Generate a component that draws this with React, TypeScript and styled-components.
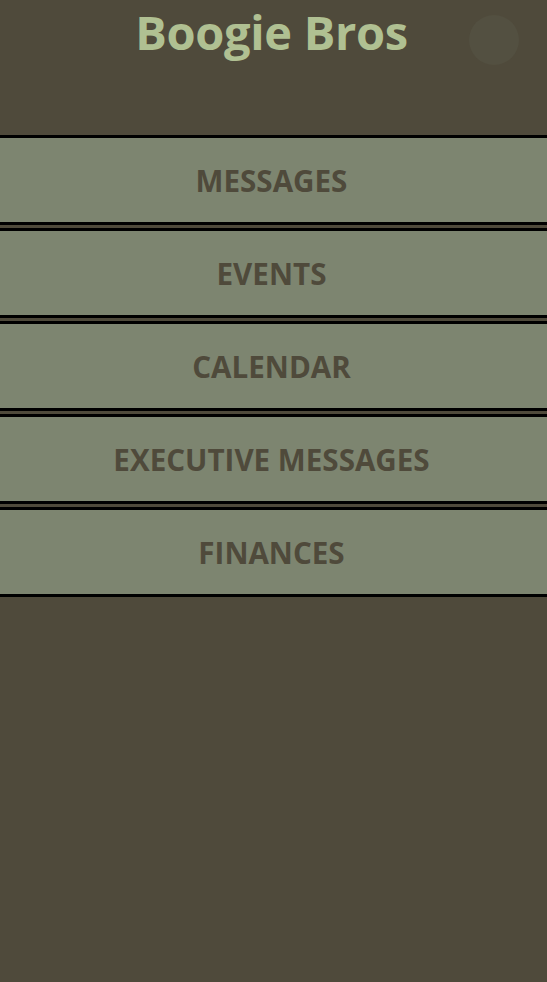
import React from 'react';
import styled, {createGlobalStyle} from "styled-components";

const GlobalStyle = createGlobalStyle`
    html, body {
        margin: 0;
        padding: 0;
        background: #4f4a3b;
    }

    body {
        font-family: "Open Sans", "Noto Sans", sans-serif;
    }
`

type MenuItemType = {
  id: string
  title: string
}

const menuItems: Array<MenuItemType> = [
  {id: 'messages', title: 'MESSAGES'},
  {id: 'events', title: 'EVENTS'},
  {id: 'calendar', title: 'CALENDAR'},
  {id: 'executive', title: 'EXECUTIVE MESSAGES'},
  {id: 'finances', title: 'FINANCES'},
];

export default function App() {
  const itemsElements = menuItems.map((item) => (
    <MenuItem key={item.id}>{item.title}</MenuItem>
  ))

  return (
    <>
      <GlobalStyle/>
      <Page>
        <Header>
          <Title>Boogie Bros</Title>
          <MenuToggle aria-label={'menu'}/>
        </Header>
        <Menu>
          {itemsElements}
        </Menu>
      </Page>
    </>
  );
}

const Page = styled.div`
    min-height: 982px;
    background: #4f4a3b;
`

const Header = styled.header`
    position: relative;
    height: 135px;
    display: flex;
    justify-content: center;
    align-items: flex-start;
    padding-right: 4px;
    box-sizing: border-box;
`

const Title = styled.h1`
    margin: 0;
    font-size: 47px;
    line-height: 64px;
    font-weight: 700;
    color: #b0c092;
    letter-spacing: -0.3px;
`

const MenuToggle = styled.button`
    position: absolute;
    top: 15px;
    right: 28px;
    width: 50px;
    height: 50px;
    border-radius: 50%;
    border: none;
    padding: 0;
    background: #535041;
`

const Menu = styled.nav`
    display: flex;
    flex-direction: column;
    gap: 3px;
`

const MenuItem = styled.div`
    height: 84px;
    border-top: 3px solid #000;
    border-bottom: 3px solid #000;
    background: #7d8570;
    display: flex;
    align-items: center;
    justify-content: center;
    padding-right: 4px;
    font-size: 29.6px;
    font-weight: 700;
    color: #4f4a3b;
`
